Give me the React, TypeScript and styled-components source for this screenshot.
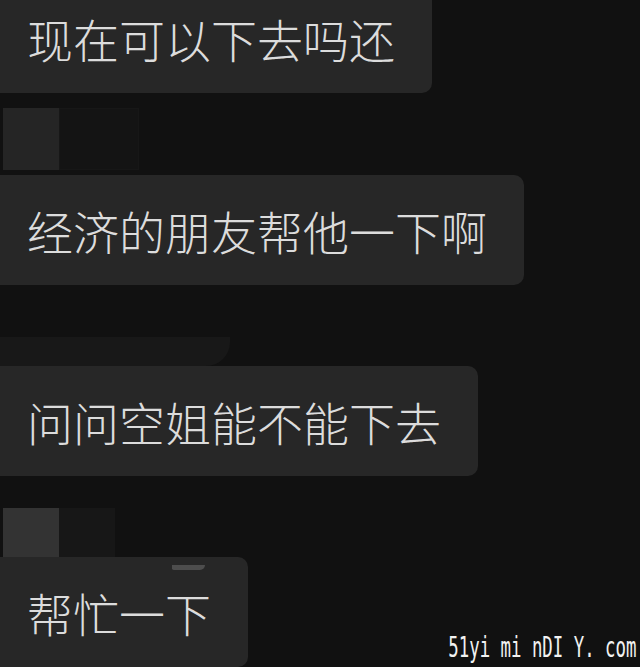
import React from "react";
import styled, { createGlobalStyle } from "styled-components";

const GlobalStyle = createGlobalStyle`
  html, body { margin: 0; padding: 0; background: #111111; }
  #root { width: 640px; height: 667px; }
`;

const Screen = styled.div`
  position: relative;
  width: 640px;
  height: 667px;
  overflow: hidden;
  background: #111111;
  display: flex;
  flex-direction: column;
  align-items: flex-start;
  font-family: "Noto Sans CJK SC", "Noto Sans", sans-serif;
`;

const Bubble = styled.div<{ $offset?: number }>`
  position: relative;
  flex: none;
  height: 110px;
  margin-top: ${(p) => p.$offset ?? 0}px;
  padding: 0 37px 0 27px;
  display: flex;
  align-items: center;
  background: #272727;
  border-radius: 0 10px 10px 0;
  color: #dcdcdc;
  font-size: 46px;
  font-weight: 300;
  line-height: 1;
  white-space: nowrap;
`;

const Redaction = styled.div<{ $top: number; $height: number; $bottom?: number }>`
  flex: none;
  display: flex;
  margin: ${(p) => p.$top}px 0 ${(p) => p.$bottom ?? 0}px 3px;
  height: ${(p) => p.$height}px;
`;

const RedactLight = styled.div<{ $color: string }>`
  width: 56px;
  height: 100%;
  background: ${(p) => p.$color};
`;

const RedactDark = styled.div<{ $color: string; $width: number }>`
  width: ${(p) => p.$width}px;
  height: 100%;
  background: ${(p) => p.$color};
  box-shadow: inset 0 0 0 1px #171717;
`;

const Smudge = styled.div`
  flex: none;
  width: 230px;
  height: 29px;
  margin-top: 52px;
  background: #181818;
  border-radius: 0 0 24px 0;
`;

const Sliver = styled.div`
  position: absolute;
  top: 8px;
  left: 172px;
  width: 33px;
  height: 5px;
  background: #4d4d4d;
  border-radius: 0 0 6px 2px;
`;

const Watermark = styled.div`
  position: absolute;
  right: 4px;
  bottom: 5px;
  font-family: "DejaVu Sans Mono", "Liberation Mono", monospace;
  font-size: 28px;
  line-height: 1;
  color: #f2f2f2;
  white-space: pre;
  transform: scaleX(0.62);
  transform-origin: right bottom;
`;

export default function App() {
  return (
    <>
      <GlobalStyle />
      <Screen>
        <Bubble $offset={-17}>现在可以下去吗还</Bubble>
        <Redaction $top={15} $height={62} $bottom={5}>
          <RedactLight $color="#252525" />
          <RedactDark $color="#141414" $width={80} />
        </Redaction>
        <Bubble>经济的朋友帮他一下啊</Bubble>
        <Smudge />
        <Bubble>问问空姐能不能下去</Bubble>
        <Redaction $top={32} $height={55}>
          <RedactLight $color="#333333" />
          <RedactDark $color="#171717" $width={56} />
        </Redaction>
        <Bubble $offset={-6}>
          <Sliver />
          帮忙一下
        </Bubble>
        <Watermark>51yi mi nDI Y. com</Watermark>
      </Screen>
    </>
  );
}
